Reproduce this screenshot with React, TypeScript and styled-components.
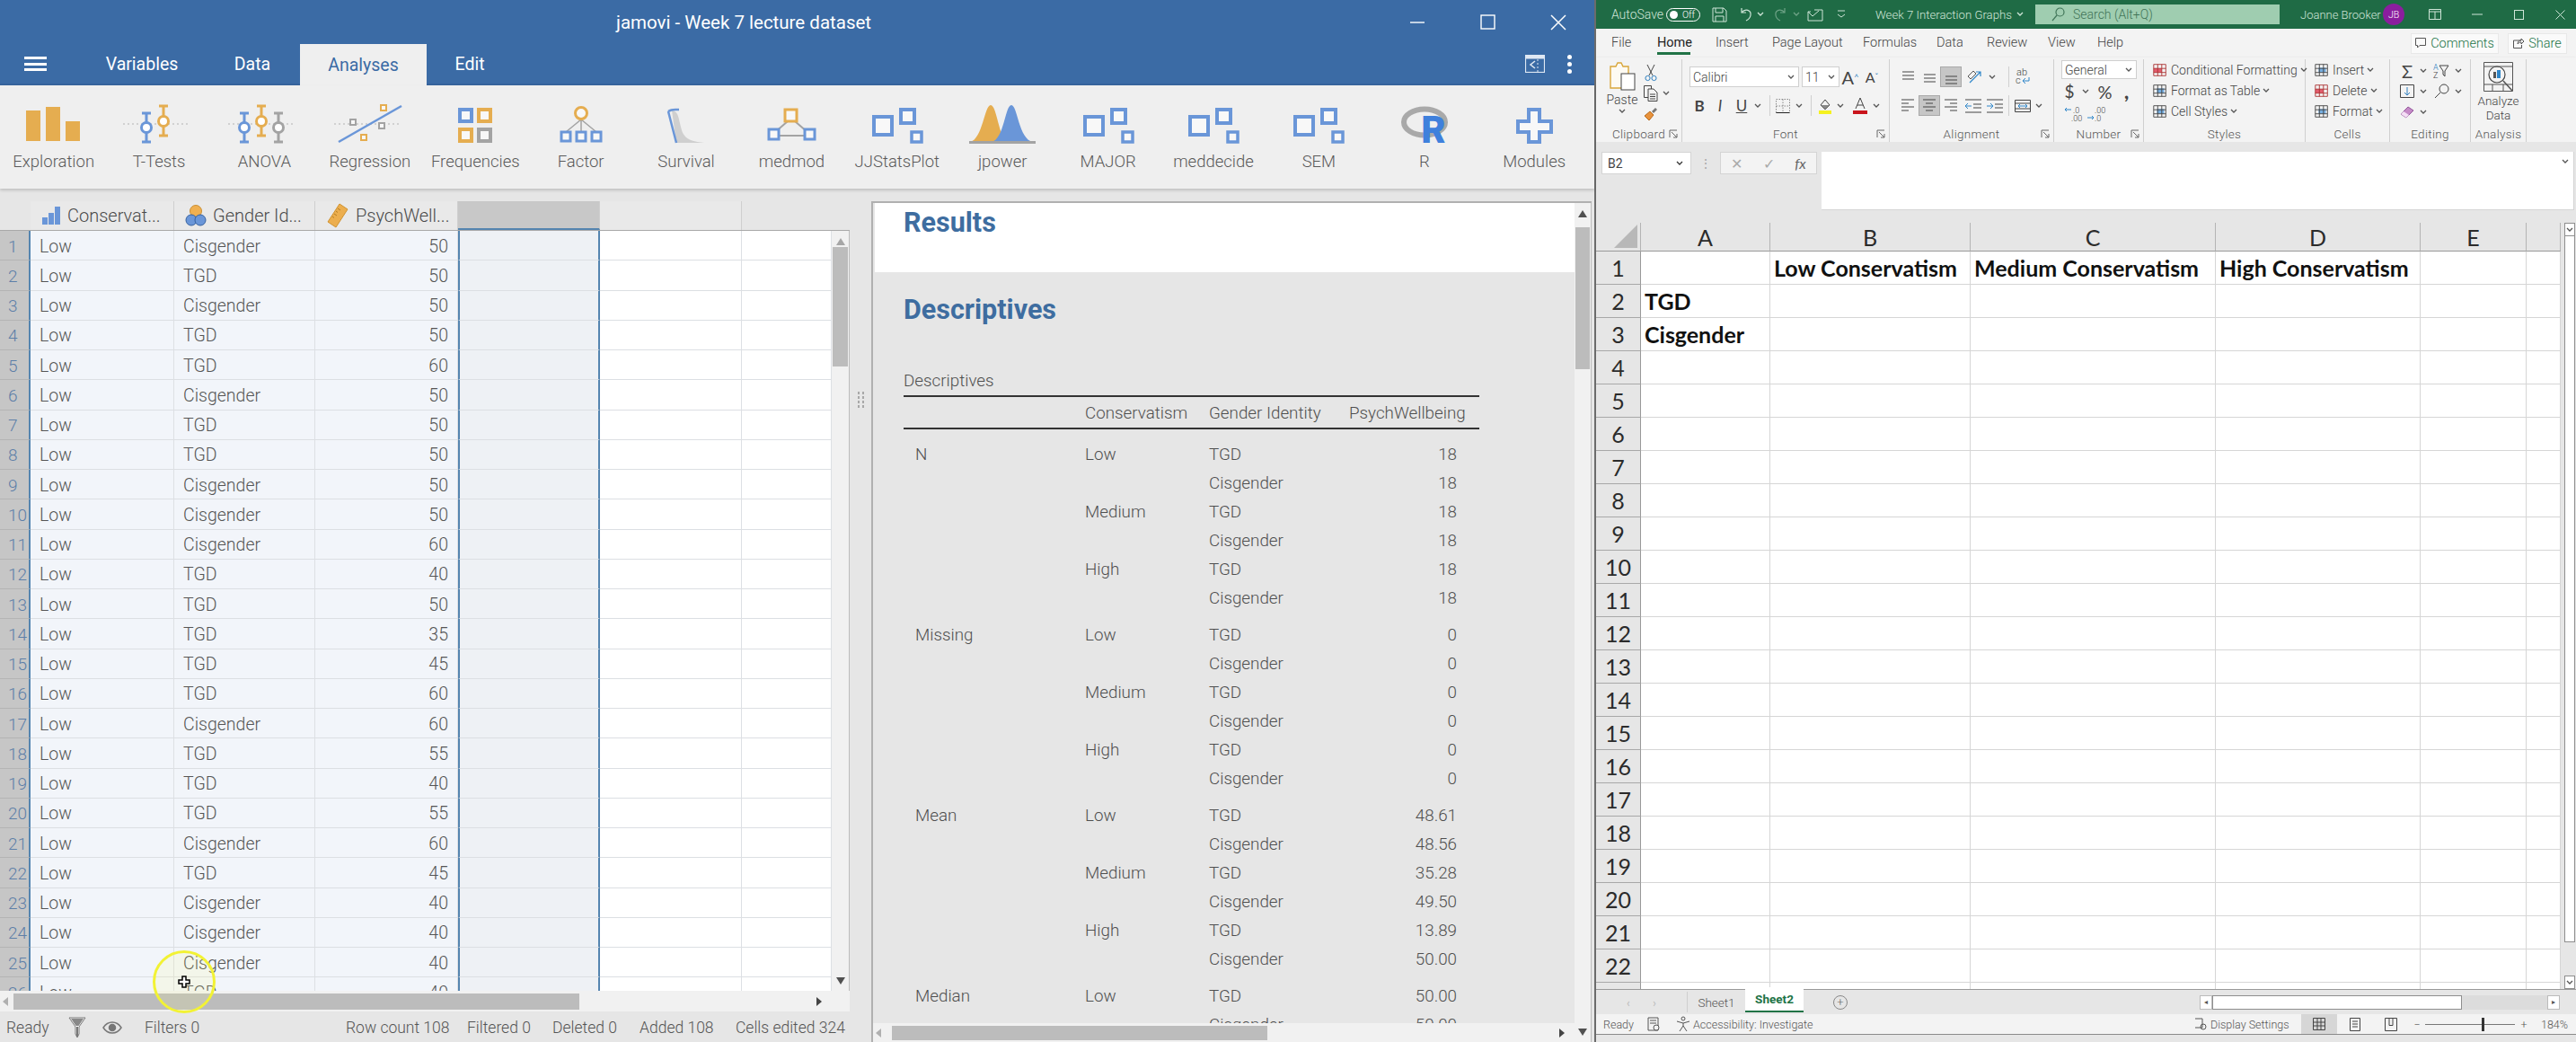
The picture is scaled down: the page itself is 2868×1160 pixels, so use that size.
import React from "react";
import styled, { createGlobalStyle } from "styled-components";

const UI = `Roboto, "Noto Sans", sans-serif`;
const CAL = `Lato, "Liberation Sans", sans-serif`;
const BLUE = "#6a96d8";
const ORANGE = "#e5ad50";
const GREY = "#a3a3a3";
const SELECT = "#5585b0";

const GlobalStyle = createGlobalStyle`
  html, body { margin: 0; padding: 0; background: #dedede; }
  body { font-family: ${UI}; }
  * { box-sizing: border-box; }
`;

/* ---------- jamovi ribbon icons ---------- */

const Riser = ({ x, top, bottom, cy, color }: { x: number; top: number; bottom: number; cy: number; color: string }) => (
  <g stroke={color} strokeWidth="3" fill="none">
    <path d={`M${x} ${top}V${bottom}M${x - 5} ${top}h10M${x - 5} ${bottom}h10`} />
    <circle cx={x} cy={cy} r="5.5" fill="#fff" />
  </g>
);

const Dots = () => <path d="M0 25H75" stroke="#c8c8c8" strokeWidth="1.5" strokeDasharray="2 3" fill="none" />;

const Sq = ({ x, y, s, c, w = 3 }: { x: number; y: number; s: number; c: string; w?: number }) => (
  <rect x={x} y={y} width={s} height={s} fill="#f8f8f8" stroke={c} strokeWidth={w} />
);

const ModuleIcon = () => (
  <>
    <Sq x={14} y={17} s={20} c={BLUE} w={4} />
    <Sq x={44} y={9} s={15} c={BLUE} w={4} />
    <Sq x={56} y={34} s={11} c={BLUE} w={3.5} />
  </>
);

const ribbonIcons: Record<string, React.ReactNode> = {
  Exploration: (
    <g fill={ORANGE}>
      <rect x="9" y="10" width="16" height="34" />
      <rect x="31" y="6" width="16" height="38" />
      <rect x="53" y="22" width="16" height="22" />
    </g>
  ),
  "T-Tests": (
    <>
      <Dots />
      <Riser x={26} top={13} bottom={45} cy={29} color={BLUE} />
      <Riser x={45} top={5} bottom={38} cy={22} color={ORANGE} />
    </>
  ),
  ANOVA: (
    <>
      <Dots />
      <Riser x={18} top={13} bottom={45} cy={29} color={BLUE} />
      <Riser x={37} top={5} bottom={38} cy={22} color={ORANGE} />
      <Riser x={56} top={13} bottom={45} cy={29} color={GREY} />
    </>
  ),
  Regression: (
    <>
      <Dots />
      <path d="M5 45L75 5" stroke={BLUE} strokeWidth="2.5" />
      <Sq x={18} y={20} s={6} c={GREY} w={2} />
      <Sq x={50} y={24} s={6} c={GREY} w={2} />
      <Sq x={52} y={4} s={6} c={ORANGE} w={2} />
      <Sq x={30} y={37} s={6} c={ORANGE} w={2} />
    </>
  ),
  Frequencies: (
    <>
      <Sq x={23} y={9} s={13} c={BLUE} w={4} />
      <Sq x={44} y={9} s={13} c={ORANGE} w={4} />
      <Sq x={23} y={31} s={13} c={ORANGE} w={4} />
      <Sq x={44} y={31} s={13} c={GREY} w={4} />
    </>
  ),
  Factor: (
    <>
      <path d="M40 20L23 34M40 20V34M40 20L57 34" stroke={GREY} strokeWidth="1.5" fill="none" />
      <circle cx="40" cy="13" r="6.5" fill="#f8f8f8" stroke={ORANGE} strokeWidth="3" />
      <Sq x={18} y={34} s={10} c={BLUE} />
      <Sq x={35} y={34} s={10} c={BLUE} />
      <Sq x={52} y={34} s={10} c={BLUE} />
    </>
  ),
  Survival: (
    <>
      <path d="M24 10C32 11 31 18 35 32C38 42 46 44 60 46H29Z" fill="#cfcfcf" />
      <path d="M20 11C24 8 28 9 32 9M20 11L29 46" stroke={BLUE} strokeWidth="2.5" fill="none" />
    </>
  ),
  medmod: (
    <>
      <path d="M36 22L22 34M44 22L58 34M26 38H54" stroke={GREY} strokeWidth="2" fill="none" />
      <Sq x={33} y={9} s={13} c={ORANGE} />
      <Sq x={15} y={31} s={11} c={BLUE} />
      <Sq x={55} y={31} s={11} c={BLUE} />
    </>
  ),
  JJStatsPlot: <ModuleIcon />,
  jpower: (
    <>
      <path d="M4 45C18 42 20 4 27 4C34 4 36 42 46 45Z" fill={ORANGE} />
      <path d="M28 45C42 42 43 4 50 4C57 4 58 42 74 45Z" fill={BLUE} />
      <rect x="3" y="44" width="74" height="3" fill={GREY} />
    </>
  ),
  MAJOR: <ModuleIcon />,
  meddecide: <ModuleIcon />,
  SEM: <ModuleIcon />,
  R: (
    <>
      <ellipse cx="40" cy="23" rx="23" ry="14.5" fill="none" stroke="#a9a9a9" strokeWidth="6" />
      <text x="50" y="46" textAnchor="middle" fontFamily="Roboto" fontWeight="900" fontSize="42" fill="#3f80dc">R</text>
    </>
  ),
  Modules: (
    <path d="M34 9H46V22H59V34H46V45H34V34H22V22H34Z" fill="#f8f8f8" stroke={BLUE} strokeWidth="4" />
  ),
};

const ribbonOrder = Object.keys(ribbonIcons);

/* ---------- jamovi window ---------- */

const Page = styled.div`
  position: relative;
  display: flex;
  width: 2868px;
  height: 1160px;
  overflow: hidden;
  background: #6b6b6b;
`;

const JamoviWindow = styled.div`
  display: flex;
  flex-direction: column;
  flex: none;
  width: 1775px;
  height: 1160px;
  background: #e6e6e6;
`;

const BlueBar = styled.div`
  display: flex;
  flex: none;
  height: 49px;
  align-items: center;
  background: #3b6ba5;
`;

const JamoviTitle = styled.div`
  margin-left: 686px;
  color: #fff;
  font-size: 20.5px;
  white-space: nowrap;
`;

const WinControls = styled.div`
  display: flex;
  margin-left: auto;
  padding-right: 1px;
  transform: none;
`;

const WinButton = styled.div`
  display: flex;
  width: 78.5px;
  height: 44px;
  align-items: center;
  justify-content: center;
`;

const TabBar = styled.div`
  display: flex;
  flex: none;
  height: 46px;
  align-items: stretch;
  background: #3b6ba5;
  border-bottom: 2px solid #36639c;
`;

const Burger = styled.div`
  display: flex;
  flex-direction: column;
  justify-content: center;
  gap: 3.5px;
  width: 88px;
  padding-left: 27px;
  & > i {
    display: block;
    width: 25px;
    height: 3px;
    background: #fff;
  }
`;

const TopTab = styled.div<{ $w: number; $on?: boolean }>`
  display: flex;
  width: ${(p) => p.$w}px;
  height: ${(p) => (p.$on ? 46 : 44)}px;
  align-items: center;
  justify-content: center;
  color: ${(p) => (p.$on ? "#3b6ba5" : "#fff")};
  background: ${(p) => (p.$on ? "#efefef" : "transparent")};
  font-size: 19.5px;
`;

const TabRight = styled.div`
  display: flex;
  margin-left: auto;
  padding-right: 25px;
  align-items: center;
  gap: 25px;
`;

const Kebab = styled.div`
  display: flex;
  flex-direction: column;
  gap: 3px;
  & > i {
    display: block;
    width: 5px;
    height: 5px;
    border-radius: 50%;
    background: #fff;
  }
`;

const Ribbon = styled.div`
  display: flex;
  flex: none;
  height: 115px;
  padding: 18px 0 0 1px;
  background: #efefef;
  box-shadow: 0 2px 3px rgba(0, 0, 0, 0.16);
`;

const RibbonItem = styled.div<{ $extra?: number }>`
  display: flex;
  flex-direction: column;
  flex: none;
  align-items: center;
  width: 117.4px;
  margin-left: ${(p) => p.$extra ?? 0}px;
`;

const RibbonLabel = styled.div`
  margin-top: 5px;
  color: #5a5a5a;
  font-size: 18.5px;
  line-height: 24px;
  font-weight: 300;
  white-space: nowrap;
`;

const Main = styled.div`
  display: flex;
  flex: 1;
  min-height: 0;
`;

const DataPane = styled.div`
  display: flex;
  flex-direction: column;
  flex: none;
  width: 946px;
  padding-top: 14px;
`;

const DataArea = styled.div`
  display: flex;
  flex: 1;
  min-height: 0;
  flex-direction: column;
`;

const HeadRow = styled.div`
  display: grid;
  flex: none;
  grid-template-columns: 34px 160px 157px 159px 158px 158px 120px;
  height: 33px;
  border-bottom: 1px solid #a9a9a9;
`;

const HeadCell = styled.div<{ $sel?: boolean; $blank?: boolean }>`
  display: flex;
  align-items: center;
  gap: 7px;
  padding-left: 12px;
  overflow: hidden;
  color: #4a4a4a;
  font-size: 20px;
  font-weight: 300;
  white-space: nowrap;
  background: ${(p) => (p.$sel ? "#c8c8c8" : p.$blank ? "transparent" : "#e9e9e9")};
  border-right: 1px solid ${(p) => (p.$blank ? "transparent" : "#cfcfcf")};
  border-bottom: ${(p) => (p.$sel ? `2px solid ${SELECT}` : "0 none")};
`;

const BodyRow = styled.div`
  display: flex;
  flex: 1;
  min-height: 0;
`;

const Rows = styled.div`
  flex: 1;
  min-width: 0;
  overflow: hidden;
  background: #fff;
`;

const DataRow = styled.div`
  display: grid;
  grid-template-columns: 34px 160px 157px 159px 158px 158px 100px;
  height: 33.25px;
`;

const NumCell = styled.div`
  display: flex;
  align-items: center;
  padding: 2px 0 0 9px;
  color: #5d7fa8;
  font-size: 19px;
  font-weight: 300;
  background: #c6c6c6;
  border-bottom: 1px solid #b4b4b4;
  border-right: 2px solid ${SELECT};
`;

const Cell = styled.div<{ $right?: boolean; $sel?: boolean; $white?: boolean; $last?: boolean }>`
  display: flex;
  align-items: center;
  justify-content: ${(p) => (p.$right ? "flex-end" : "flex-start")};
  padding: 2px 10px 0;
  color: #555;
  font-size: 19.5px;
  font-weight: 300;
  background: ${(p) => (p.$white ? "#fff" : p.$sel ? "#eef1f5" : "#f2f5fa")};
  border-bottom: 1px solid #dcdfe3;
  border-right: 1px solid ${(p) => (p.$sel ? SELECT : "#dde0e4")};
  border-left: ${(p) => (p.$sel ? `2px solid ${SELECT}` : "0 none")};
  border-right-width: ${(p) => (p.$sel ? 2 : 1)}px;
`;

const VScroll = styled.div<{ $w: number; $thumbTop: number; $thumbH: number }>`
  position: relative;
  flex: none;
  width: ${(p) => p.$w}px;
  background: #f1f1f1;
  border-right: 1px solid #bbb;
  &::before {
    content: "";
    position: absolute;
    left: 1px;
    right: 1px;
    top: ${(p) => p.$thumbTop}px;
    height: ${(p) => p.$thumbH}px;
    background: #bcbcbc;
  }
`;

const ArrowUp = styled.i<{ $dark?: boolean }>`
  position: absolute;
  left: 50%;
  top: 8px;
  margin-left: -5px;
  border: 5px solid transparent;
  border-top: 0;
  border-bottom: 8px solid ${(p) => (p.$dark ? "#505050" : "#a6a6a6")};
`;

const ArrowDown = styled.i`
  position: absolute;
  left: 50%;
  bottom: 7px;
  margin-left: -5px;
  border: 5px solid transparent;
  border-bottom: 0;
  border-top: 8px solid #505050;
`;

const HScroll = styled.div<{ $h: number; $thumbLeft: number; $thumbW: number }>`
  position: relative;
  flex: none;
  height: ${(p) => p.$h}px;
  background: #f1f1f1;
  &::before {
    content: "";
    position: absolute;
    top: 3px;
    bottom: 2px;
    left: ${(p) => p.$thumbLeft}px;
    width: ${(p) => p.$thumbW}px;
    background: #bcbcbc;
  }
`;

const ArrowLeft = styled.i`
  position: absolute;
  top: 50%;
  left: 3px;
  margin-top: -5px;
  border: 5px solid transparent;
  border-left: 0;
  border-right: 6px solid #b0b0b0;
`;

const ArrowRight = styled.i<{ $at: number }>`
  position: absolute;
  top: 50%;
  left: ${(p) => p.$at}px;
  margin-top: -5px;
  border: 5px solid transparent;
  border-right: 0;
  border-left: 6px solid #444;
`;

const StatusBar = styled.div`
  display: flex;
  flex: none;
  height: 33px;
  align-items: center;
  padding-left: 7px;
  margin-top: 1px;
  color: #555;
  font-size: 17.5px;
  font-weight: 300;
  white-space: nowrap;
`;

const StatusText = styled.span<{ $w: number }>`
  display: flex;
  flex: none;
  align-items: center;
  gap: 3px;
  width: ${(p) => p.$w}px;
`;

const Splitter = styled.div`
  display: flex;
  flex: none;
  flex-direction: column;
  width: 24px;
  align-items: center;
  justify-content: center;
  gap: 2px;
  padding-bottom: 480px;
  & > i {
    display: block;
    width: 7px;
    height: 3px;
    border-left: 2px solid #a8a8a8;
    border-right: 2px solid #a8a8a8;
  }
`;

const ResultsPane = styled.div`
  display: flex;
  flex: none;
  width: 802px;
  margin-top: 14px;
  border-top: 2px solid #b0b0b0;
  border-left: 2px solid #b0b0b0;
  background: #e6e6e6;
`;

const ResultsCol = styled.div`
  display: flex;
  flex-direction: column;
  flex: 1;
  min-width: 0;
`;

const ResultsScroll = styled.div`
  flex: 1;
  min-height: 0;
  overflow: hidden;
  padding-left: 2px;
`;

const ResultsHead = styled.div`
  height: 77px;
  padding: 5px 0 0 32px;
  background: #fff;
  color: #3e6da0;
  font-size: 30.5px;
  font-weight: 700;
  line-height: 34px;
`;

const Section = styled.div`
  padding: 24px 0 0 32px;
`;

const SectionTitle = styled.div`
  color: #3e6da0;
  font-size: 30.5px;
  font-weight: 700;
  line-height: 36px;
`;

const Caption = styled.div`
  margin-top: 50px;
  height: 27px;
  color: #4f4f4f;
  font-size: 18.8px;
  font-weight: 300;
  line-height: 23px;
`;

const ResTable = styled.div`
  width: 641px;
`;

const ResGrid = styled.div<{ $top?: number }>`
  display: grid;
  grid-template-columns: 202px 138px 156px 145px;
  height: 32px;
  align-items: center;
  margin-top: ${(p) => p.$top ?? 0}px;
  color: #4f4f4f;
  font-size: 18.8px;
  font-weight: 300;
`;

const ResHeader = styled(ResGrid)`
  height: 38px;
  padding-top: 2px;
  border-top: 2px solid #333;
  border-bottom: 2px solid #333;
`;

const RowLabel = styled.span`
  padding-left: 13px;
`;

const Value = styled.span`
  padding-right: 25px;
  text-align: right;
`;

const Highlight = styled.div`
  position: absolute;
  left: 170px;
  top: 1058px;
  width: 70px;
  height: 70px;
  border-radius: 50%;
  border: 3px solid #f2f234;
  background: rgba(255, 255, 120, 0.12);
`;

const Pointer = styled.svg`
  position: absolute;
  left: 198px;
  top: 1086px;
`;

/* ---------- small Excel icons ---------- */

const Svg = ({ s = 20, children }: { s?: number; children: React.ReactNode }) => (
  <svg width={s} height={s} viewBox="0 0 20 20" fill="none" stroke="#444" strokeWidth="1">
    {children}
  </svg>
);

const Chevron = ({ c = "#555" }: { c?: string }) => (
  <svg width="8" height="6" viewBox="0 0 8 6" fill="none" stroke={c} strokeWidth="1.3">
    <path d="M1 1l3 3 3-3" />
  </svg>
);

const Lines = ({ rows }: { rows: [number, number, number][] }) => (
  <Svg>
    {rows.map(([x1, x2, y]) => (
      <path key={y} d={`M${x1} ${y}H${x2}`} />
    ))}
  </Svg>
);

const GridIcon = ({ red, blue }: { red?: boolean; blue?: boolean }) => (
  <Svg s={18}>
    {red && <rect x="2" y="8" width="10" height="5" fill="#e45c6e" stroke="none" />}
    {blue && <rect x="6" y="7" width="9" height="6" fill="#76aee0" stroke="none" />}
    <path d="M2 3h15v14H2zM2 8h15M2 13h15M7 3v14M12 3v14" stroke={red ? "#a33" : "#444"} />
  </Svg>
);

const Launcher = () => (
  <svg width="11" height="11" viewBox="0 0 11 11" fill="none" stroke="#666">
    <path d="M1 9V1h8M3 3l6 6M9 5v4H5" />
  </svg>
);

const DecimalIcon = ({ more }: { more?: boolean }) => (
  <svg width="22" height="20" viewBox="0 0 22 20" fill="none" stroke="#2f86c9">
    <text x={more ? 9 : 11} y="9" fontFamily="Roboto" fontSize="9" fill="#444" stroke="none">{more ? ".00" : ".0"}</text>
    <text x="9" y="18" fontFamily="Roboto" fontSize="9" fill="#444" stroke="none">{more ? ".0" : ".00"}</text>
    {more ? <path d="M1 14h7M6 12l2 2-2 2" /> : <path d="M9 5H2M4 3L2 5l2 2" />}
  </svg>
);

/* ---------- Excel window ---------- */

const ExcelWindow = styled.div`
  display: flex;
  flex-direction: column;
  flex: none;
  width: 1091px;
  height: 1160px;
  margin-left: 2px;
  overflow: hidden;
  background: #e6e6e6;
`;

const GreenBar = styled.div`
  display: flex;
  flex: none;
  height: 32px;
  align-items: center;
  padding-left: 21px;
  background: #1f6b45;
  color: #cfe5d8;
  font-size: 14px;
  font-weight: 300;
  white-space: nowrap;
`;

const Slot = styled.div<{ $w: number }>`
  display: flex;
  flex: none;
  width: ${(p) => p.$w}px;
  align-items: center;
  justify-content: center;
`;

const Toggle = styled.div`
  display: flex;
  flex: none;
  align-items: center;
  justify-content: space-between;
  width: 38px;
  height: 15px;
  margin-left: 7px;
  padding: 0 5px 0 3px;
  border: 1px solid #fff;
  border-radius: 8px;
  color: #fff;
  font-size: 10.5px;
  & > i {
    width: 9px;
    height: 9px;
    border-radius: 50%;
    background: #fff;
  }
`;

const DocTitle = styled.div`
  display: flex;
  flex: none;
  align-items: center;
  gap: 5px;
  width: 178px;
  margin-left: 25px;
  font-size: 13.2px;
`;

const SearchBox = styled.div`
  display: flex;
  flex: none;
  align-items: center;
  width: 272px;
  height: 22px;
  padding-left: 18px;
  gap: 9px;
  background: #9fcdb0;
  color: #3f7457;
  font-size: 14px;
`;

const UserName = styled.div`
  flex: none;
  width: 81px;
  margin-left: 23px;
  font-size: 13px;
`;

const Avatar = styled.div`
  display: flex;
  width: 24px;
  height: 24px;
  align-items: center;
  justify-content: center;
  border-radius: 50%;
  background: #8b1e9e;
  color: #fff;
  font-size: 10.5px;
`;

const MenuRow = styled.div`
  display: flex;
  flex: none;
  height: 32px;
  align-items: center;
  padding-left: 17px;
  background: #f3f3f3;
  color: #444;
  font-size: 14.5px;
  font-weight: 300;
`;

const MenuTab = styled.div<{ $w: number; $on?: boolean }>`
  position: relative;
  flex: none;
  width: ${(p) => p.$w}px;
  line-height: 32px;
  color: ${(p) => (p.$on ? "#222" : "#444")};
  font-weight: ${(p) => (p.$on ? 400 : 300)};
  &::after {
    content: "";
    display: ${(p) => (p.$on ? "block" : "none")};
    position: absolute;
    left: 0;
    bottom: 3px;
    width: 37px;
    height: 3px;
    background: #217346;
  }
`;

const MenuSpacer = styled.div`
  flex: 1;
`;

const PillButton = styled.div<{ $w: number }>`
  display: flex;
  flex: none;
  align-items: center;
  justify-content: center;
  gap: 5px;
  width: ${(p) => p.$w}px;
  height: 23px;
  margin-right: 10px;
  background: #fafafa;
  border: 1px solid #e8e8e8;
  color: #217346;
  font-size: 14.5px;
`;

const XlRibbon = styled.div`
  display: flex;
  flex: none;
  height: 94px;
  background: #f3f3f3;
  box-shadow: 0 2px 4px rgba(0, 0, 0, 0.22);
  color: #444;
  font-size: 14px;
  font-weight: 300;
`;

const Group = styled.div<{ $w: number; $line?: boolean }>`
  display: flex;
  flex-direction: column;
  flex: none;
  width: ${(p) => p.$w}px;
  height: 92px;
  margin-top: 2px;
  border-right: 1px solid ${(p) => (p.$line === false ? "transparent" : "#cfcfcf")};
`;

const GroupBody = styled.div<{ $pt?: number; $pl?: number }>`
  display: flex;
  flex: none;
  height: 75px;
  padding: ${(p) => p.$pt ?? 8}px 0 0 ${(p) => p.$pl ?? 8}px;
`;

const GroupLabel = styled.div`
  position: relative;
  flex: 1;
  color: #555;
  font-size: 13.5px;
  line-height: 17px;
  text-align: center;
  letter-spacing: 0.3px;
  & > svg {
    position: absolute;
    right: 3px;
    top: 3px;
  }
`;

const Stack = styled.div<{ $gap?: number }>`
  display: flex;
  flex-direction: column;
  flex: none;
  gap: ${(p) => p.$gap ?? 9}px;
`;

const BtnRow = styled.div<{ $h?: number }>`
  display: flex;
  align-items: center;
  height: ${(p) => p.$h ?? 23}px;
`;

const Btn = styled.div<{ $w: number; $on?: boolean }>`
  display: flex;
  flex: none;
  align-items: center;
  justify-content: center;
  width: ${(p) => p.$w}px;
  height: 23px;
  background: ${(p) => (p.$on ? "#c6c6c6" : "transparent")};
  border: ${(p) => (p.$on ? "1px solid #a9a9a9" : "0 none")};
`;

const VSep = styled.div<{ $w: number }>`
  display: flex;
  flex: none;
  justify-content: center;
  width: ${(p) => p.$w}px;
  height: 23px;
  &::before {
    content: "";
    width: 1px;
    background: #cfcfcf;
  }
`;

const ComboBox = styled.div<{ $w: number; $h?: number }>`
  display: flex;
  flex: none;
  align-items: center;
  justify-content: space-between;
  width: ${(p) => p.$w}px;
  height: ${(p) => p.$h ?? 23}px;
  padding: 0 4px 0 3px;
  background: #fff;
  border: 1px solid #cfcfcf;
  color: #444;
  font-size: 14px;
`;

const Glyph = styled.span<{ $size: number; $weight?: number; $italic?: boolean; $under?: boolean; $color?: string }>`
  color: ${(p) => p.$color ?? "#444"};
  font-family: ${CAL};
  font-size: ${(p) => p.$size}px;
  font-weight: ${(p) => p.$weight ?? 400};
  font-style: ${(p) => (p.$italic ? "italic" : "normal")};
  text-decoration: ${(p) => (p.$under ? "underline" : "none")};
  line-height: 1;
`;

const PasteCol = styled.div`
  display: flex;
  flex-direction: column;
  flex: none;
  align-items: center;
  gap: 2px;
  width: 44px;
`;

const ListRow = styled.div`
  display: flex;
  align-items: center;
  gap: 3px;
  height: 21px;
  white-space: nowrap;
`;

const TallLabel = styled.div`
  line-height: 16px;
  text-align: center;
  font-size: 13.5px;
`;

const AnalyzeCol = styled.div`
  display: flex;
  flex-direction: column;
  align-items: center;
  width: 61px;
  gap: 2px;
`;

const FormulaArea = styled.div`
  display: flex;
  flex: none;
  height: 90px;
  padding: 11px 2px 0 6px;
  background: #e6e6e6;
  color: #444;
  font-size: 14px;
`;

const NameBox = styled.div`
  display: flex;
  flex: none;
  align-items: center;
  justify-content: space-between;
  width: 100px;
  height: 25px;
  padding: 0 8px 0 6px;
  background: #fff;
  border: 1px solid #d4d4d4;
`;

const FxDots = styled.div`
  display: flex;
  flex: none;
  width: 32px;
  height: 25px;
  align-items: center;
  justify-content: center;
  color: #a8a8a8;
  font-size: 14px;
`;

const FxBox = styled.div`
  display: flex;
  flex: none;
  align-items: center;
  justify-content: space-around;
  width: 108px;
  height: 25px;
  background: #f3f3f3;
  border: 1px solid #d4d4d4;
`;

const FormulaInput = styled.div`
  display: flex;
  flex: 1;
  height: 65px;
  margin-left: 5px;
  justify-content: flex-end;
  padding: 8px 5px 0 0;
  background: #fff;
  border: 1px solid #d4d4d4;
  border-left: 0;
  border-top: 0;
`;

const SheetWrap = styled.div`
  display: flex;
  flex: none;
  height: 853px;
`;

const SheetGrid = styled.div`
  display: flex;
  flex-direction: column;
  flex: none;
  width: 1074px;
  overflow: hidden;
`;

const XlRow = styled.div<{ $head?: boolean }>`
  display: grid;
  flex: none;
  grid-template-columns: 50px 144px 223px 273px 228px 118px 38px;
  height: ${(p) => (p.$head ? 32 : 37)}px;
  background: ${(p) => (p.$head ? "#e6e6e6" : "#fff")};
`;

const Corner = styled.div`
  display: flex;
  align-items: flex-end;
  justify-content: flex-end;
  padding: 0 3px 3px 0;
  background: #e6e6e6;
  border-bottom: 1px solid #999;
  border-right: 1px solid #b4b4b4;
`;

const ColHead = styled.div`
  display: flex;
  align-items: center;
  justify-content: center;
  color: #2b2b2b;
  font-family: ${CAL};
  font-size: 25px;
  background: #e6e6e6;
  border-bottom: 1px solid #999;
  border-right: 1px solid #b4b4b4;
`;

const RowHead = styled.div`
  display: flex;
  align-items: center;
  justify-content: center;
  color: #2b2b2b;
  font-family: ${CAL};
  font-size: 25px;
  background: #e6e6e6;
  border-bottom: 1px solid #a8a8a8;
  border-right: 1px solid #999;
`;

const XlCell = styled.div`
  display: flex;
  align-items: center;
  padding-left: 4px;
  color: #111;
  font-family: ${CAL};
  font-size: 25px;
  font-weight: 700;
  white-space: nowrap;
  border-bottom: 1px solid #d6d6d6;
  border-right: 1px solid #d6d6d6;
`;

const XlVScroll = styled.div`
  display: flex;
  flex-direction: column;
  flex: none;
  width: 12px;
  margin-left: 4px;
  background: #e6e6e6;
`;

const XlArrowBox = styled.div`
  display: flex;
  flex: none;
  height: 15px;
  align-items: center;
  justify-content: center;
  background: #fff;
  border: 1px solid #8e8e8e;
`;

const XlThumb = styled.div`
  flex: none;
  height: 786px;
  background: #fff;
  border: 1px solid #8e8e8e;
  border-top: 0;
`;

const XlFill = styled.div`
  flex: 1;
`;

const TabsRow = styled.div`
  display: flex;
  flex: none;
  height: 28px;
  align-items: center;
  border-top: 1px solid #999;
  background: #e6e6e6;
  color: #555;
  font-size: 13.5px;
  font-weight: 300;
`;

const SheetTab = styled.div<{ $on?: boolean }>`
  display: flex;
  flex: none;
  align-items: center;
  justify-content: center;
  width: ${(p) => (p.$on ? 65 : 64)}px;
  height: 28px;
  margin-top: ${(p) => (p.$on ? -5 : 0)}px;
  color: ${(p) => (p.$on ? "#217346" : "#555")};
  font-weight: ${(p) => (p.$on ? 700 : 300)};
  background: ${(p) => (p.$on ? "#fff" : "transparent")};
  border-bottom: ${(p) => (p.$on ? "2px solid #217346" : "0 none")};
`;

const PlusRound = styled.div`
  display: flex;
  flex: none;
  width: 16px;
  height: 16px;
  margin-left: 33px;
  align-items: center;
  justify-content: center;
  border: 1.5px solid #888;
  border-radius: 50%;
  color: #666;
  font-size: 13px;
  line-height: 1;
`;

const SheetHScroll = styled.div`
  display: flex;
  flex: none;
  align-items: center;
  width: 401px;
  height: 16px;
  margin-left: 12px;
  background: #dcdcdc;
`;

const HThumb = styled.div`
  flex: none;
  width: 278px;
  height: 16px;
  background: #fff;
  border: 1px solid #8e8e8e;
`;

const SmallBtn = styled.div`
  display: flex;
  flex: none;
  width: 14px;
  height: 16px;
  align-items: center;
  justify-content: center;
  background: #fff;
  border: 1px solid #bbb;
  color: #555;
  font-size: 8px;
`;

const StatusRow = styled.div`
  display: flex;
  flex: none;
  height: 23px;
  align-items: center;
  padding-left: 8px;
  background: #f3f3f3;
  border-bottom: 1px solid #8a8a8a;
  color: #555;
  font-size: 12.5px;
  font-weight: 300;
  white-space: nowrap;
`;

const ViewBtn = styled.div<{ $on?: boolean }>`
  display: flex;
  flex: none;
  width: 40px;
  height: 22px;
  align-items: center;
  justify-content: center;
  background: ${(p) => (p.$on ? "#d6d6d6" : "transparent")};
`;

const Slider = styled.div`
  position: relative;
  flex: none;
  width: 100px;
  height: 1px;
  background: #777;
  & > i {
    position: absolute;
    left: 63px;
    top: -7px;
    width: 3px;
    height: 15px;
    background: #333;
  }
`;

type Gender = "Cisgender" | "TGD";
const C: Gender = "Cisgender";
const T: Gender = "TGD";

const dataRows: [Gender, number][] = [
  [C, 50], [T, 50], [C, 50], [T, 50], [T, 60], [C, 50], [T, 50], [T, 50], [C, 50],
  [C, 50], [C, 60], [T, 40], [T, 50], [T, 35], [T, 45], [T, 60], [C, 60], [T, 55],
  [T, 40], [T, 55], [C, 60], [T, 45], [C, 40], [C, 40], [C, 40], [T, 40],
];

const blocks: { label: string; vals: string[] }[] = [
  { label: "N", vals: ["18", "18", "18", "18", "18", "18"] },
  { label: "Missing", vals: ["0", "0", "0", "0", "0", "0"] },
  { label: "Mean", vals: ["48.61", "48.56", "35.28", "49.50", "13.89", "50.00"] },
  { label: "Median", vals: ["50.00", "50.00"] },
];
const levels = ["Low", "", "Medium", "", "High", ""];
const genders = ["TGD", "Cisgender"];

const menuTabs: [string, number][] = [
  ["File", 51], ["Home", 65], ["Insert", 63], ["Page Layout", 101], ["Formulas", 82],
  ["Data", 56], ["Review", 68], ["View", 55], ["Help", 40],
];

const colLetters = ["A", "B", "C", "D", "E", ""];
const sheetRows = Array.from({ length: 23 }, (_, i) => i + 1);
const cellText: Record<string, string> = {
  "1-1": "Low Conservatism",
  "1-2": "Medium Conservatism",
  "1-3": "High Conservatism",
  "2-0": "TGD",
  "3-0": "Cisgender",
};

const tabs: [string, number, boolean?][] = [
  ["Variables", 140],
  ["Data", 106],
  ["Analyses", 141, true],
  ["Edit", 96],
];

const AnalyzeButton = () => (
  <AnalyzeCol>
    <svg width="33" height="33" viewBox="0 0 33 33" fill="none" stroke="#555">
      <path d="M.5.5h32v32H.5zM.5 5h32M.5 25h32M10 25v7M22 25v7" />
      <circle cx="15" cy="14" r="9" stroke="#444" strokeWidth="1.2" />
      <rect x="11" y="11" width="3" height="7" fill="#555" stroke="none" />
      <rect x="15" y="9" width="4" height="9" fill="#2f86c9" stroke="none" />
      <path d="M22 21l10 11" strokeWidth="1.5" />
    </svg>
    <TallLabel>Analyze<br />Data</TallLabel>
  </AnalyzeCol>
);

const App = () => (
  <Page>
    <GlobalStyle />
    <JamoviWindow>
      <BlueBar>
        <JamoviTitle>jamovi - Week 7 lecture dataset</JamoviTitle>
        <WinControls>
          <WinButton>
            <svg width="18" height="4" viewBox="0 0 18 4"><path d="M1 2h16" stroke="#fff" strokeWidth="1.4" /></svg>
          </WinButton>
          <WinButton>
            <svg width="17" height="17" viewBox="0 0 17 17"><rect x="1" y="1" width="15" height="15" fill="none" stroke="#fff" strokeWidth="1.4" /></svg>
          </WinButton>
          <WinButton>
            <svg width="18" height="18" viewBox="0 0 18 18"><path d="M1 1l16 16M17 1L1 17" stroke="#fff" strokeWidth="1.5" /></svg>
          </WinButton>
        </WinControls>
      </BlueBar>
      <TabBar>
        <Burger><i /><i /><i /></Burger>
        {tabs.map(([t, w, on]) => (
          <TopTab key={t} $w={w} $on={on}>{t}</TopTab>
        ))}
        <TabRight>
          <svg width="22" height="20" viewBox="0 0 22 20" fill="none" stroke="#dfe8f3">
            <rect x="0.5" y="0.5" width="21" height="19" strokeWidth="1.2" />
            <rect x="1" y="1" width="20" height="3" fill="#dfe8f3" />
            <path d="M11 7l-5 4 5 4" strokeWidth="1.6" />
            <path d="M14 5v14" strokeDasharray="2 2" />
          </svg>
          <Kebab><i /><i /><i /></Kebab>
        </TabRight>
      </TabBar>
      <Ribbon>
        {ribbonOrder.map((name) => (
          <RibbonItem key={name} $extra={name === "Modules" ? 5 : 0}>
            <svg width="80" height="50" viewBox="0 0 80 50">{ribbonIcons[name]}</svg>
            <RibbonLabel>{name}</RibbonLabel>
          </RibbonItem>
        ))}
      </Ribbon>
      <Main>
        <DataPane>
          <DataArea>
            <HeadRow>
              <HeadCell $blank />
              <HeadCell>
                <svg width="22" height="22" viewBox="0 0 22 22" fill="#6a96d8"><rect x="1" y="13" width="6" height="8" /><rect x="8" y="8" width="6" height="13" /><rect x="15" y="1" width="6" height="20" /></svg>
                Conservat...
              </HeadCell>
              <HeadCell>
                <svg width="24" height="26" viewBox="0 0 24 26"><circle cx="12" cy="8" r="6.5" fill="#f0b050" stroke="#c98f35" /><circle cx="7" cy="18" r="6" fill="#6a96d8" stroke="#35619f" /><circle cx="17" cy="18" r="6" fill="#6a96d8" stroke="#35619f" /></svg>
                Gender Id...
              </HeadCell>
              <HeadCell>
                <svg width="26" height="28" viewBox="0 0 26 28"><path d="M15 1l9 6L11 27 2 21z" fill="#ecae4e" stroke="#d09330" /><path d="M13 6l3 2M11 9l2 1.5M9 12l3 2M7 15l2 1.5" stroke="#b57e24" /></svg>
                PsychWell...
              </HeadCell>
              <HeadCell $sel />
              <HeadCell />
              <HeadCell $blank />
            </HeadRow>
            <BodyRow>
              <Rows>
                {dataRows.map(([g, v], i) => (
                  <DataRow key={i}>
                    <NumCell>{i + 1}</NumCell>
                    <Cell>Low</Cell>
                    <Cell>{g}</Cell>
                    <Cell $right>{v}</Cell>
                    <Cell $sel />
                    <Cell $white />
                    <Cell $white />
                  </DataRow>
                ))}
              </Rows>
              <VScroll $w={20} $thumbTop={18} $thumbH={133}>
                <ArrowUp />
                <ArrowDown />
              </VScroll>
            </BodyRow>
            <HScroll $h={23} $thumbLeft={15} $thumbW={630}>
              <ArrowLeft />
              <ArrowRight $at={909} />
            </HScroll>
          </DataArea>
          <StatusBar>
            <StatusText $w={69}>Ready</StatusText>
            <StatusText $w={38}>
              <svg width="20" height="24" viewBox="0 0 20 24" fill="#777"><path d="M1 1h18l-7 10v8l-2 4-2-4v-8z" fill="#fff" stroke="#777" /><path d="M3 2h14l-5.5 8h-3z" fill="#888" /><path d="M9 11h2v11H9z" /></svg>
            </StatusText>
            <StatusText $w={47}>
              <svg width="22" height="16" viewBox="0 0 22 16" fill="none" stroke="#777" strokeWidth="1.5"><path d="M1 8c5-8 15-8 20 0-5 8-15 8-20 0z" /><circle cx="11" cy="8" r="3.5" fill="#777" /></svg>
            </StatusText>
            <StatusText $w={224}>Filters 0</StatusText>
            <StatusText $w={135}>Row count 108</StatusText>
            <StatusText $w={95}>Filtered 0</StatusText>
            <StatusText $w={97}>Deleted 0</StatusText>
            <StatusText $w={107}>Added 108</StatusText>
            <StatusText $w={120}>Cells edited 324</StatusText>
          </StatusBar>
        </DataPane>
        <Splitter><i /><i /><i /><i /></Splitter>
        <ResultsPane>
          <ResultsCol>
            <ResultsScroll>
              <ResultsHead>Results</ResultsHead>
              <Section>
                <SectionTitle>Descriptives</SectionTitle>
                <Caption>Descriptives</Caption>
                <ResTable>
                  <ResHeader>
                    <span />
                    <span>Conservatism</span>
                    <span>Gender Identity</span>
                    <span>PsychWellbeing</span>
                  </ResHeader>
                  {blocks.map((b) =>
                    b.vals.map((v, i) => (
                      <ResGrid key={b.label + i} $top={i === 0 ? (b.label === "N" ? 12 : 9) : 0}>
                        <RowLabel>{i === 0 ? b.label : ""}</RowLabel>
                        <span>{levels[i]}</span>
                        <span>{genders[i % 2]}</span>
                        <Value>{v}</Value>
                      </ResGrid>
                    ))
                  )}
                </ResTable>
              </Section>
            </ResultsScroll>
            <HScroll $h={21} $thumbLeft={21} $thumbW={418}>
              <ArrowLeft />
              <ArrowRight $at={764} />
            </HScroll>
          </ResultsCol>
          <VScroll $w={19} $thumbTop={27} $thumbH={158}>
            <ArrowUp $dark />
            <ArrowDown />
          </VScroll>
        </ResultsPane>
      </Main>
    </JamoviWindow>

    <ExcelWindow>
      <GreenBar>
        <Slot $w={50}>AutoSave</Slot>
        <Toggle><i />Off</Toggle>
        <Slot $w={42}>
          <svg width="17" height="17" viewBox="0 0 17 17" fill="none" stroke="#cfe5d8"><path d="M1 1h12l3 3v12H1zM4 1v5h8V1M4 16v-6h9v6" /></svg>
        </Slot>
        <Slot $w={16}>
          <svg width="15" height="16" viewBox="0 0 15 16" fill="none" stroke="#cfe5d8" strokeWidth="1.2"><path d="M3 1v5h5M3 6c4-5 11-3 10 3-.5 3-3 5-5 6" /></svg>
        </Slot>
        <Slot $w={18}><Chevron c="#cfe5d8" /></Slot>
        <Slot $w={26}>
          <svg width="15" height="16" viewBox="0 0 15 16" fill="none" stroke="#6fa387" strokeWidth="1.2"><path d="M12 1v5H7M12 6C8 1 1 3 2 9c.5 3 3 5 5 6" /></svg>
        </Slot>
        <Slot $w={10}><Chevron c="#6fa387" /></Slot>
        <Slot $w={32}>
          <svg width="18" height="15" viewBox="0 0 18 15" fill="none" stroke="#cfe5d8"><path d="M1 4h3M8 2h9v12H1V4l5 5 7-6" /></svg>
        </Slot>
        <Slot $w={26}>
          <svg width="10" height="10" viewBox="0 0 10 10" fill="none" stroke="#cfe5d8"><path d="M1 1h8M1 5l4 3 4-3" /></svg>
        </Slot>
        <DocTitle>Week 7 Interaction Graphs <Chevron c="#cfe5d8" /></DocTitle>
        <SearchBox>
          <svg width="15" height="16" viewBox="0 0 15 16" fill="none" stroke="#3f7457" strokeWidth="1.2"><circle cx="9.5" cy="5.5" r="4.5" /><path d="M6 9l-5 6" /></svg>
          Search (Alt+Q)
        </SearchBox>
        <UserName>Joanne Brooker</UserName>
        <Slot $w={46}><Avatar>JB</Avatar></Slot>
        <Slot $w={46}>
          <svg width="14" height="12" viewBox="0 0 14 12" fill="none" stroke="#cfe5d8"><path d="M.5.5h13v11H.5zM.5 3h13M7 3v8" /></svg>
        </Slot>
        <Slot $w={47}><svg width="12" height="2" viewBox="0 0 12 2"><path d="M0 1h12" stroke="#cfe5d8" /></svg></Slot>
        <Slot $w={46}><svg width="11" height="11" viewBox="0 0 11 11"><rect x=".5" y=".5" width="10" height="10" fill="none" stroke="#cfe5d8" /></svg></Slot>
        <Slot $w={46}><svg width="11" height="11" viewBox="0 0 11 11"><path d="M.5.5l10 10M10.5.5l-10 10" stroke="#cfe5d8" /></svg></Slot>
      </GreenBar>

      <MenuRow>
        {menuTabs.map(([t, w]) => (
          <MenuTab key={t} $w={w} $on={t === "Home"}>{t}</MenuTab>
        ))}
        <MenuSpacer />
        <PillButton $w={98}>
          <svg width="12" height="12" viewBox="0 0 12 12" fill="none" stroke="#555"><path d="M.5.5h11v8H5L2.5 11V8.5h-2z" /></svg>
          Comments
        </PillButton>
        <PillButton $w={66}>
          <svg width="12" height="12" viewBox="0 0 12 12" fill="none" stroke="#555"><path d="M9 3H.5v8.5h9V8M5 7c0-3 2-4 4-4V1l3 3-3 3V5C7 5 6 6 5 7z" /></svg>
          Share
        </PillButton>
      </MenuRow>

      <XlRibbon>
        <Group $w={96}>
          <GroupBody $pt={3} $pl={7}>
            <PasteCol>
              <svg width="30" height="32" viewBox="0 0 30 32" fill="none"><path d="M2 5h6l2-4h4l2 4h6v24H2z" fill="#fdfaf2" stroke="#d9a63a" strokeWidth="1.4" /><rect x="14" y="13" width="15" height="18" fill="#fff" stroke="#444" /></svg>
              Paste
              <Chevron />
            </PasteCol>
            <Stack $gap={0}>
              <Btn $w={20}>
                <svg width="14" height="20" viewBox="0 0 14 20" fill="none" stroke="#444"><path d="M3 1l6 12M11 1L5 13" /><circle cx="3.5" cy="16" r="2.6" stroke="#2f7fbf" /><circle cx="10.5" cy="16" r="2.6" stroke="#2f7fbf" /></svg>
              </Btn>
              <BtnRow>
                <Btn $w={20}>
                  <svg width="16" height="18" viewBox="0 0 16 18" fill="#f3f3f3" stroke="#444"><path d="M.5.5h8v13h-8z" /><path d="M5 4h6l4 4v9.5H5z" /><path d="M7 10h6M7 12.5h6M7 15h6" /></svg>
                </Btn>
                <Btn $w={14}><Chevron /></Btn>
              </BtnRow>
              <Btn $w={20}>
                <svg width="16" height="16" viewBox="0 0 16 16"><path d="M1 10l6-5 4 4-5 6z" fill="#e8923c" stroke="#b86a1c" /><path d="M9 5l4-4 2 2-4 4z" fill="#777" /></svg>
              </Btn>
            </Stack>
          </GroupBody>
          <GroupLabel>Clipboard<Launcher /></GroupLabel>
        </Group>

        <Group $w={231}>
          <GroupBody>
            <Stack>
              <BtnRow>
                <ComboBox $w={122}>Calibri<Chevron /></ComboBox>
                <Btn $w={3} />
                <ComboBox $w={42}>11<Chevron /></ComboBox>
                <Btn $w={24}><Glyph $size={20}>A</Glyph><Glyph $size={9} $color="#2f7fbf">^</Glyph></Btn>
                <Btn $w={24}><Glyph $size={16}>A</Glyph><Glyph $size={9} $color="#2f7fbf">ˇ</Glyph></Btn>
              </BtnRow>
              <BtnRow>
                <Btn $w={22}><Glyph $size={17} $weight={700}>B</Glyph></Btn>
                <Btn $w={24}><Glyph $size={17} $italic>I</Glyph></Btn>
                <Btn $w={24}><Glyph $size={17} $under>U</Glyph></Btn>
                <Btn $w={12}><Chevron /></Btn>
                <VSep $w={14} />
                <Btn $w={16}>
                  <svg width="16" height="16" viewBox="0 0 16 16" fill="none" stroke="#888" strokeDasharray="1.5 1.5"><path d="M.5.5h15v15H.5zM8 .5v15M.5 8h15" /><path d="M.5 15.5h15" stroke="#222" strokeDasharray="none" /></svg>
                </Btn>
                <Btn $w={20}><Chevron /></Btn>
                <VSep $w={6} />
                <Btn $w={26}>
                  <svg width="18" height="19" viewBox="0 0 18 19" fill="none"><path d="M4 9l5-6 5 6-5 5z" stroke="#444" /><path d="M4 9h10l-5 5z" fill="#888" /><rect x="2" y="15" width="14" height="4" fill="#f5f11f" /></svg>
                </Btn>
                <Btn $w={8}><Chevron /></Btn>
                <Btn $w={4} />
                <Btn $w={28}>
                  <svg width="18" height="19" viewBox="0 0 18 19" fill="none"><path d="M4 13L9 1l5 12M6 9h6" stroke="#444" /><rect x="1" y="15" width="16" height="4" fill="#c9141c" /></svg>
                </Btn>
                <Btn $w={8}><Chevron /></Btn>
              </BtnRow>
            </Stack>
          </GroupBody>
          <GroupLabel>Font<Launcher /></GroupLabel>
        </Group>

        <Group $w={183}>
          <GroupBody>
            <Stack>
              <BtnRow>
                <Btn $w={24}><Lines rows={[[4, 17, 4], [4, 17, 8], [4, 17, 12]]} /></Btn>
                <Btn $w={24}><Lines rows={[[4, 17, 7], [4, 17, 11], [4, 17, 15]]} /></Btn>
                <Btn $w={24} $on><Lines rows={[[4, 17, 9], [4, 17, 13], [4, 17, 17]]} /></Btn>
                <Btn $w={28}>
                  <svg width="20" height="18" viewBox="0 0 20 18" fill="none"><path d="M3 8l6-6 3 3-6 6z" stroke="#555" /><path d="M5 15L17 3M12 3h5v5" stroke="#2f86c9" strokeWidth="1.2" /></svg>
                </Btn>
                <Btn $w={12}><Chevron /></Btn>
              </BtnRow>
              <BtnRow>
                <Btn $w={24}><Lines rows={[[3, 17, 3], [3, 11, 7], [3, 17, 11], [3, 11, 15]]} /></Btn>
                <Btn $w={24} $on><Lines rows={[[3, 17, 3], [6, 14, 7], [3, 17, 11], [6, 14, 15]]} /></Btn>
                <Btn $w={24}><Lines rows={[[3, 17, 3], [9, 17, 7], [3, 17, 11], [9, 17, 15]]} /></Btn>
                <Btn $w={25}>
                  <svg width="20" height="16" viewBox="0 0 20 16" fill="none" stroke="#444"><path d="M1 1h18M10 6h9M10 10h9M1 15h18" /><path d="M8 8H1M1 8l3-3M1 8l3 3" stroke="#2f86c9" /></svg>
                </Btn>
                <Btn $w={24}>
                  <svg width="20" height="16" viewBox="0 0 20 16" fill="none" stroke="#444"><path d="M1 1h18M10 6h9M10 10h9M1 15h18" /><path d="M1 8h7M8 8L5 5M8 8l-3 3" stroke="#2f86c9" /></svg>
                </Btn>
              </BtnRow>
            </Stack>
            <Stack>
              <BtnRow>
                <VSep $w={7} />
                <Btn $w={24}>
                  <svg width="18" height="22" viewBox="0 0 18 22" fill="none"><text x="2" y="9" fontFamily="Roboto" fontSize="11" fill="#444">ab</text><text x="1" y="18" fontFamily="Roboto" fontSize="11" fill="#444">c</text><path d="M16 11v4H9M9 15l3-3M9 15l3 3" stroke="#2f86c9" /></svg>
                </Btn>
              </BtnRow>
              <BtnRow>
                <VSep $w={7} />
                <Btn $w={24}>
                  <svg width="18" height="18" viewBox="0 0 18 18" fill="none" stroke="#444"><path d="M.5 2.5h17v13H.5zM.5 6h17M.5 12h17" /><path d="M4 9h10M4 9l2-2M4 9l2 2M14 9l-2-2M14 9l-2 2" stroke="#2f86c9" /></svg>
                </Btn>
                <Btn $w={12}><Chevron /></Btn>
              </BtnRow>
            </Stack>
          </GroupBody>
          <GroupLabel>Alignment<Launcher /></GroupLabel>
        </Group>

        <Group $w={100}>
          <GroupBody $pt={1}>
            <Stack $gap={2}>
              <ComboBox $w={84} $h={21}>General<Chevron /></ComboBox>
              <BtnRow>
                <Btn $w={18}><Glyph $size={19}>$</Glyph></Btn>
                <Btn $w={18}><Chevron /></Btn>
                <Btn $w={25}><Glyph $size={20}>%</Glyph></Btn>
                <Btn $w={23}><Glyph $size={22} $weight={900}>,</Glyph></Btn>
              </BtnRow>
              <BtnRow>
                <Btn $w={26}><DecimalIcon /></Btn>
                <Btn $w={26}><DecimalIcon more /></Btn>
              </BtnRow>
            </Stack>
          </GroupBody>
          <GroupLabel>Number<Launcher /></GroupLabel>
        </Group>

        <Group $w={180}>
          <GroupBody $pt={1} $pl={9}>
            <Stack $gap={2}>
              <ListRow><GridIcon red /> Conditional Formatting <Chevron /></ListRow>
              <ListRow><GridIcon blue /> Format as Table <Chevron /></ListRow>
              <ListRow><GridIcon blue /> Cell Styles <Chevron /></ListRow>
            </Stack>
          </GroupBody>
          <GroupLabel>Styles</GroupLabel>
        </Group>

        <Group $w={94}>
          <GroupBody $pt={1} $pl={9}>
            <Stack $gap={2}>
              <ListRow><GridIcon blue /> Insert <Chevron /></ListRow>
              <ListRow><GridIcon red /> Delete <Chevron /></ListRow>
              <ListRow><GridIcon blue /> Format <Chevron /></ListRow>
            </Stack>
          </GroupBody>
          <GroupLabel>Cells</GroupLabel>
        </Group>

        <Group $w={90}>
          <GroupBody $pt={1} $pl={9}>
            <Stack $gap={0}>
              <BtnRow>
                <Btn $w={20}><Glyph $size={20}>Σ</Glyph></Btn>
                <Btn $w={16}><Chevron /></Btn>
                <Btn $w={24}>
                  <svg width="18" height="18" viewBox="0 0 18 18" fill="none" stroke="#444"><path d="M7 3h10l-4 6v6l-2-2V9z" /><text x="0" y="8" fontSize="9" fontFamily="Roboto" fill="#2f7fbf" stroke="none">A</text><text x="0" y="17" fontSize="9" fontFamily="Roboto" fill="#444" stroke="none">Z</text></svg>
                </Btn>
                <Btn $w={14}><Chevron /></Btn>
              </BtnRow>
              <BtnRow>
                <Btn $w={20}>
                  <svg width="16" height="15" viewBox="0 0 16 15" fill="none" stroke="#444"><path d="M.5.5h15v14H.5z" /><path d="M8 3v9M5 9l3 3 3-3" stroke="#2f7fbf" /></svg>
                </Btn>
                <Btn $w={16}><Chevron /></Btn>
                <Btn $w={24}>
                  <svg width="17" height="17" viewBox="0 0 17 17" fill="none" stroke="#444"><circle cx="11" cy="6" r="5" /><path d="M7 10l-6 6" /></svg>
                </Btn>
                <Btn $w={14}><Chevron /></Btn>
              </BtnRow>
              <BtnRow>
                <Btn $w={20}>
                  <svg width="16" height="14" viewBox="0 0 16 14"><path d="M1 9l8-8 6 4-8 8z" fill="#c58ac7" stroke="#93569a" /><path d="M1 9l3-3 6 4-3 3z" fill="#f4dff5" /></svg>
                </Btn>
                <Btn $w={16}><Chevron /></Btn>
              </BtnRow>
            </Stack>
          </GroupBody>
          <GroupLabel>Editing</GroupLabel>
        </Group>

        <Group $w={62}>
          <GroupBody $pt={3} $pl={0}>
            <AnalyzeButton />
          </GroupBody>
          <GroupLabel>Analysis</GroupLabel>
        </Group>
      </XlRibbon>

      <FormulaArea>
        <NameBox>B2<Chevron c="#333" /></NameBox>
        <FxDots>⋮</FxDots>
        <FxBox>
          <Glyph $size={16} $color="#aaa">✕</Glyph>
          <Glyph $size={16} $color="#aaa">✓</Glyph>
          <Glyph $size={16} $italic $color="#666">fx</Glyph>
        </FxBox>
        <FormulaInput><Chevron c="#555" /></FormulaInput>
      </FormulaArea>

      <SheetWrap>
        <SheetGrid>
          <XlRow $head>
            <Corner>
              <svg width="26" height="26" viewBox="0 0 26 26"><path d="M0 26L26 0V26z" fill="#b8b8b8" /></svg>
            </Corner>
            {colLetters.map((c, i) => (
              <ColHead key={i}>{c}</ColHead>
            ))}
          </XlRow>
          {sheetRows.map((r) => (
            <XlRow key={r}>
              <RowHead>{r <= 22 ? r : ""}</RowHead>
              {colLetters.map((_, c) => (
                <XlCell key={c}>{cellText[`${r}-${c}`]}</XlCell>
              ))}
            </XlRow>
          ))}
        </SheetGrid>
        <XlVScroll>
          <XlArrowBox><Chevron c="#555" /></XlArrowBox>
          <XlThumb />
          <XlFill />
          <XlArrowBox><Chevron c="#555" /></XlArrowBox>
        </XlVScroll>
      </SheetWrap>

      <TabsRow>
        <Slot $w={101}><Glyph $size={14} $color="#bbb">‹&nbsp;&nbsp;&nbsp;&nbsp;&nbsp;&nbsp;&nbsp;›</Glyph></Slot>
        <VSep $w={1} />
        <SheetTab>Sheet1</SheetTab>
        <SheetTab $on>Sheet2</SheetTab>
        <PlusRound>+</PlusRound>
        <Slot $w={380} />
        <SheetHScroll>
          <SmallBtn>◂</SmallBtn>
          <HThumb />
          <XlFill />
          <SmallBtn>▸</SmallBtn>
        </SheetHScroll>
      </TabsRow>

      <StatusRow>
        <StatusText $w={49}>Ready</StatusText>
        <StatusText $w={32}>
          <svg width="15" height="16" viewBox="0 0 15 16" fill="none" stroke="#555"><path d="M1 1h11v14H1zM3 4h7M3 7h7" /><circle cx="10" cy="12" r="3" fill="#f3f3f3" /></svg>
        </StatusText>
        <StatusText $w={19}>
          <svg width="16" height="18" viewBox="0 0 16 18" fill="none" stroke="#555"><circle cx="8" cy="3" r="2" /><path d="M1 6l7 2 7-2M8 8v3l-4 6M8 11l4 6" /></svg>
        </StatusText>
        <StatusText $w={558}>Accessibility: Investigate</StatusText>
        <StatusText $w={119}>
          <svg width="15" height="15" viewBox="0 0 15 15" fill="none" stroke="#555"><path d="M1 1h8v10H1" /><circle cx="10" cy="10" r="3" /></svg>
          Display Settings
        </StatusText>
        <ViewBtn $on><svg width="14" height="14" viewBox="0 0 14 14" fill="none" stroke="#444"><path d="M.5.5h13v13H.5zM.5 5h13M.5 9h13M5 .5v13M9 .5v13" /></svg></ViewBtn>
        <ViewBtn><svg width="12" height="15" viewBox="0 0 12 15" fill="none" stroke="#444"><path d="M.5.5h11v14H.5zM3 4h6M3 7h6M3 10h6" /></svg></ViewBtn>
        <ViewBtn><svg width="14" height="15" viewBox="0 0 14 15" fill="none" stroke="#444"><path d="M.5.5h13v14H.5zM5 .5v8h4v-8" /></svg></ViewBtn>
        <Slot $w={18}>−</Slot>
        <Slider><i /></Slider>
        <Slot $w={20}>+</Slot>
        <Slot $w={9} />
        <StatusText $w={30}>184%</StatusText>
      </StatusRow>
    </ExcelWindow>

    <Highlight />
    <Pointer width="14" height="14" viewBox="0 0 14 14">
      <path d="M5 1h4v4h4v4H9v4H5V9H1V5h4z" fill="#fff" stroke="#000" strokeWidth="1.5" />
    </Pointer>
  </Page>
);

export default App;
